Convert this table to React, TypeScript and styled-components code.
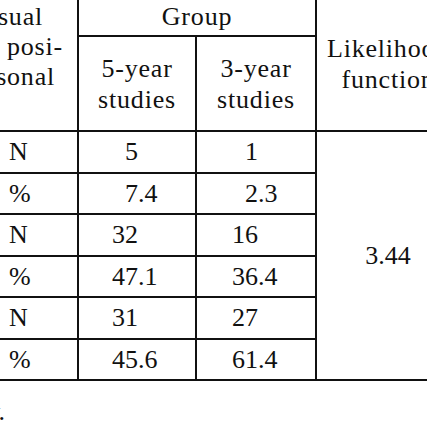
import React from "react"
import styled, { createGlobalStyle } from "styled-components"

const GlobalStyle = createGlobalStyle`
  html, body {
    margin: 0;
    padding: 0;
    background: #fff;
  }
  body {
    width: 427px;
    height: 427px;
    overflow: hidden;
  }
`

const Page = styled.div`
  width: 427px;
  height: 427px;
  overflow: hidden;
  font-family: "Liberation Serif", "Times New Roman", serif;
  color: #111;
`

const Table = styled.table`
  border-collapse: collapse;
  table-layout: fixed;
  width: 529px;
  margin-left: -70px;
  margin-top: -5px;
  font-size: 26px;
`

const Row = styled.tr<{ $h: number }>`
  height: ${(p) => p.$h}px;
`

const HeadCell = styled.th`
  border: 2px solid #111;
  padding: 0;
  font-weight: normal;
  letter-spacing: 0.8px;
  line-height: 31px;
  text-align: center;
  vertical-align: middle;
`

const TopLeftCell = styled(HeadCell)`
  vertical-align: top;
  padding-top: 5px;
  line-height: 30px;
`

const HeadLine = styled.div<{ $inset: number }>`
  text-align: right;
  white-space: nowrap;
  padding-right: ${(p) => p.$inset}px;
`

const Cell = styled.td`
  border: 2px solid #111;
  padding: 0;
  line-height: 30px;
  vertical-align: middle;
`

const UnitCell = styled(Cell)`
  padding-left: 17px;
  text-align: left;
`

const NumCell = styled(Cell)`
  text-align: left;
  white-space: nowrap;
`

const IntPart = styled.span<{ $w: number }>`
  display: inline-block;
  width: ${(p) => p.$w}px;
  text-align: right;
`

const ResultCell = styled(Cell)`
  text-align: center;
`

const Note = styled.div`
  width: 200px;
  margin-left: -195px;
  margin-top: 16px;
  font-size: 26px;
  line-height: 30px;
  text-align: right;
  white-space: nowrap;
`

const Decimal = ({ value, w }: { value: string; w: number }) => {
  const [int, frac] = value.split(".")
  return (
    <>
      <IntPart $w={w}>{int}</IntPart>
      {frac !== undefined && <span>.{frac}</span>}
    </>
  )
}

const rows = [
  { unit: "N", a: "5", b: "1", h: 42 },
  { unit: "%", a: "7.4", b: "2.3", h: 41 },
  { unit: "N", a: "32", b: "16", h: 42 },
  { unit: "%", a: "47.1", b: "36.4", h: 41 },
  { unit: "N", a: "31", b: "27", h: 42 },
  { unit: "%", a: "45.6", b: "61.4", h: 41 },
]

export default function App() {
  return (
    <Page>
      <GlobalStyle />
      <Table>
        <colgroup>
          <col style={{ width: 60 }} />
          <col style={{ width: 87 }} />
          <col style={{ width: 118 }} />
          <col style={{ width: 120 }} />
          <col style={{ width: 144 }} />
        </colgroup>
        <thead>
          <Row $h={40}>
            <TopLeftCell colSpan={2} rowSpan={2}>
              <HeadLine $inset={34}>Visual</HeadLine>
              <HeadLine $inset={14}>by posi-</HeadLine>
              <HeadLine $inset={22}>personal</HeadLine>
            </TopLeftCell>
            <HeadCell colSpan={2}>Group</HeadCell>
            <HeadCell rowSpan={2}>
              Likelihood
              <br />
              function
            </HeadCell>
          </Row>
          <Row $h={95}>
            <HeadCell>
              5-year
              <br />
              studies
            </HeadCell>
            <HeadCell>
              3-year
              <br />
              studies
            </HeadCell>
          </Row>
        </thead>
        <tbody>
          {rows.map((r, i) => (
            <Row $h={r.h} key={i}>
              {i % 2 === 0 && <Cell rowSpan={2} />}
              <UnitCell>{r.unit}</UnitCell>
              <NumCell>
                <Decimal value={r.a} w={59} />
              </NumCell>
              <NumCell>
                <Decimal value={r.b} w={61} />
              </NumCell>
              {i === 0 && <ResultCell rowSpan={6}>3.44</ResultCell>}
            </Row>
          ))}
        </tbody>
      </Table>
      <Note>Source: own study.</Note>
    </Page>
  )
}
